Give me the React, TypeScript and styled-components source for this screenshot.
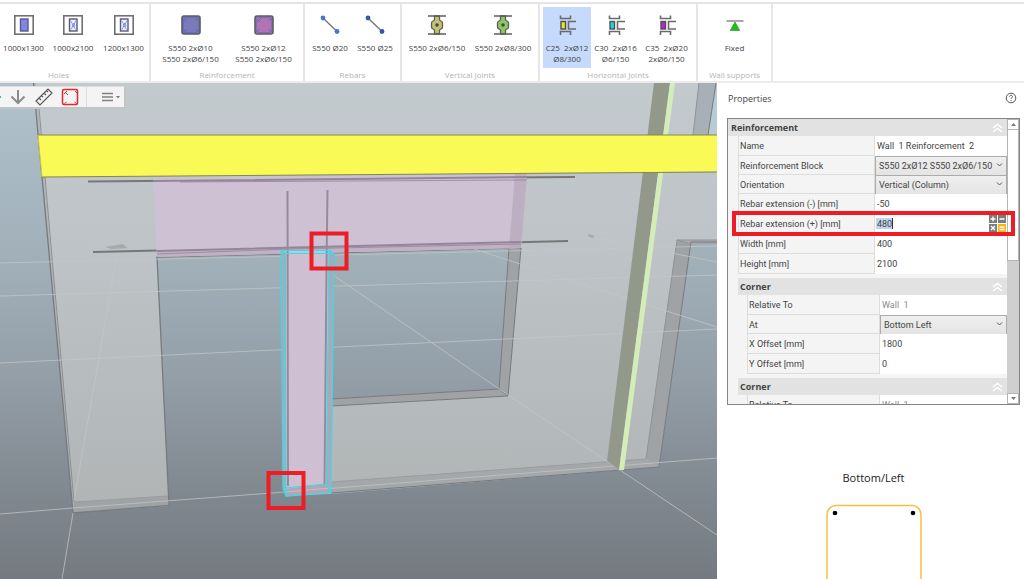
import React, { useId } from "react";
import styled, { createGlobalStyle } from "styled-components";

const GlobalStyle = createGlobalStyle`
  *, *::before, *::after { box-sizing: border-box; }
  html, body, #root { height: 100%; }
  body {
    margin: 0;
    background: #fff;
    color: #444;
    font-family: "Open Sans", "Noto Sans", sans-serif;
    font-size: 9px;
  }
  button, input, select { font: inherit; color: inherit; }
`;

const Page = styled.div`
  display: flex;
  flex-direction: column;
  height: 100%;
  overflow: hidden;
`;

/* ---------- ribbon ---------- */

const Ribbon = styled.header`
  display: flex;
  flex: none;
  height: 83px;
  padding-top: 2px;
  overflow: hidden;
  border-bottom: 2px solid #ececec;
`;

const RibbonBody = styled.div`
  display: flex;
  flex: 1;
  min-width: 0;
  border-top: 2px solid #e4e4e4;
`;

const Group = styled.section<{ $width: number; $scrolled?: boolean }>`
  display: flex;
  flex-direction: column;
  flex: none;
  align-items: ${(p) => (p.$scrolled ? "flex-end" : "center")};
  width: ${(p) => p.$width}px;
  margin-left: ${(p) => (p.$scrolled ? "-32px" : "0")};
  padding-top: 3px;
  border-right: 2px solid #e6e6e6;
`;

const Tools = styled.div`
  display: flex;
  flex: 1;
`;

const GroupName = styled.h2`
  align-self: stretch;
  margin: 0;
  color: #b4b4b4;
  font-size: 8px;
  font-weight: 400;
  line-height: 14px;
  text-align: center;
`;

const Tool = styled.button<{ $width: number; $active?: boolean }>`
  display: flex;
  flex-direction: column;
  align-items: center;
  gap: 6px;
  width: ${(p) => p.$width}px;
  height: 61px;
  padding: 7px 0 0;
  border: 0;
  background: ${(p) => (p.$active ? "#c5dafc" : "transparent")};
  font-size: 8px;
  line-height: 11px;
  text-align: center;
  white-space: pre;

  svg { flex: none; }
`;

const HoleIcon = ({ fill }: { fill: string }) => (
  <svg width="22" height="22" viewBox="0 0 22 22" fill="none">
    <rect x="1.8" y="1.8" width="18.4" height="18.4" stroke="#707070" strokeWidth="1.6" />
    <rect x="7.5" y="5" width="7.5" height="12" fill={fill} stroke="#555b80" strokeWidth="1.4" />
    <path d="M8.5 6.5l5 9M14 6.5l-5 9M10 11l2-2 1 3-2 1z" stroke="#7a86d8" strokeWidth="0.8" />
  </svg>
);

const BlockIcon = ({ fill }: { fill: string }) => (
  <svg width="22" height="22" viewBox="0 0 22 22" fill="none">
    <rect x="2" y="2" width="18" height="18" rx="2" fill={fill} stroke="#5b5b62" strokeWidth="1.6" />
    <rect x="3.500" y="3.500" width="15" height="15" rx="1.500" stroke="#6068b4" strokeWidth="0.6" />
    <path d="M4 8l4-4M4 5l3 3" stroke="#5968c8" strokeWidth="0.8" />
    <path d="M4 17.500l2-2M18 17.500l-2-2M18 4.500l-2 2" stroke="#4c5cc4" strokeWidth="1" />
  </svg>
);

const BarIcon = ({ fill }: { fill: string }) => (
  <svg width="22" height="22" viewBox="0 0 22 22">
    <path d="M4 4L18 17.500" stroke="#777" strokeWidth="1.4" />
    <circle cx="4" cy="4" r="2.400" fill={fill} />
    <circle cx="18" cy="17.500" r="2.400" fill={fill} />
  </svg>
);

const VerticalJointIcon = ({ fill }: { fill: string }) => (
  <svg width="22" height="22" viewBox="0 0 22 22">
    <path
      d="M8.500 2v3.500q0 1-1.500 1.500t-1.500 2v4q0 1.500 1.500 2t1.500 1.500V20h5v-3.500q0-1 1.500-1.500t1.500-2V9q0-1.500-1.500-2t-1.500-1.500V2z"
      fill={fill}
      stroke="#5c5f58"
      strokeWidth="1.300"
    />
    <path d="M2 2h18M2 20h18" stroke="#5e5e5e" strokeWidth="1.500" />
    <circle cx="11" cy="11" r="1.800" fill="#45484f" />
  </svg>
);

const HorizontalJointIcon = ({ fill }: { fill: string }) => (
  <svg width="22" height="22" viewBox="0 0 22 22" fill="none" stroke="#6a6a6a" strokeWidth="1.600">
    <path d="M4.500 1.500v3h10v-3M4.500 21v-3.500h10V21" />
    <path d="M20 7.500h-7.500v7.500H20" />
    <rect x="5" y="7.500" width="4.500" height="7.500" fill={fill} stroke="#505050" strokeWidth="1.400" />
  </svg>
);

const SupportIcon = () => (
  <svg width="22" height="22" viewBox="0 0 22 22">
    <path d="M2.500 7h17" stroke="#777" strokeWidth="1.300" />
    <path d="M11 8l4.800 8.500H6.200z" fill="#12c412" stroke="#3e8c3e" strokeWidth="0.700" />
  </svg>
);

interface ToolInfo {
  label: string;
  icon: React.ReactNode;
  width: number;
  active?: boolean;
}

const groups: { name: string; width: number; scrolled?: boolean; tools: ToolInfo[] }[] = [
  {
    name: "Holes",
    width: 183,
    scrolled: true,
    tools: [
      { label: "1000x1300", width: 49, icon: <HoleIcon fill="#8583f4" /> },
      { label: "1000x2100", width: 50, icon: <HoleIcon fill="#eef0fc" /> },
      { label: "1200x1300", width: 51, icon: <HoleIcon fill="#eef0fc" /> },
    ],
  },
  {
    name: "Reinforcement",
    width: 154,
    tools: [
      { label: "S550 2xØ10\nS550 2xØ6/150", width: 73, icon: <BlockIcon fill="#7b7abb" /> },
      { label: "S550 2xØ12\nS550 2xØ6/150", width: 73, icon: <BlockIcon fill="#b074b4" /> },
    ],
  },
  {
    name: "Rebars",
    width: 97,
    tools: [
      { label: "S550 Ø20", width: 45, icon: <BarIcon fill="#4478cc" /> },
      { label: "S550 Ø25", width: 45, icon: <BarIcon fill="#3757a4" /> },
    ],
  },
  {
    name: "Vertical Joints",
    width: 138,
    tools: [
      { label: "S550 2xØ6/150", width: 66, icon: <VerticalJointIcon fill="#c4c26c" /> },
      { label: "S550 2xØ8/300", width: 66, icon: <VerticalJointIcon fill="#8dc764" /> },
    ],
  },
  {
    name: "Horizontal Joints",
    width: 158,
    tools: [
      { label: "C25  2xØ12\nØ8/300", width: 48, active: true, icon: <HorizontalJointIcon fill="#e8e81c" /> },
      { label: "C30  2xØ16\nØ6/150", width: 49, icon: <HorizontalJointIcon fill="#22d4e4" /> },
      { label: "C35  2xØ20\n2xØ6/150", width: 53, icon: <HorizontalJointIcon fill="#cc18dc" /> },
    ],
  },
  {
    name: "Wall supports",
    width: 75,
    tools: [{ label: "Fixed", width: 48, icon: <SupportIcon /> }],
  },
];

/* ---------- 3D view ---------- */

const Workspace = styled.main`
  display: flex;
  flex: 1;
  min-height: 0;
`;

const View = styled.section`
  position: relative;
  flex: 1;
  min-width: 0;
  overflow: hidden;
  background: #939ea7;
`;

const Scene = styled.svg`
  display: block;
  width: 100%;
  height: 100%;
`;

const ViewTools = styled.div`
  position: absolute;
  top: 3px;
  left: 0;
  display: flex;
  align-items: center;
  height: 23px;
  padding: 0 4px 0 8px;
  border: 1px solid #dcdcdc;
  border-left: 0;
  border-right: 2px solid #c4c4c4;
  border-bottom: 2px solid #c4c4c4;
  background: #f4f4f4;

  &::before {
    position: absolute;
    left: 0;
    width: 1px;
    height: 2px;
    background: #41b8a0;
    content: "";
  }
`;

const ViewButton = styled.button`
  display: grid;
  place-items: center;
  width: 26px;
  height: 20px;
  padding: 0 6px 0 0;
  border: 0;
  background: none;
`;

const MenuButton = styled(ViewButton)`
  width: 34px;
  padding: 0 0 0 15px;
  border-left: 1px solid #dedede;
`;

const Model = () => (
  <Scene viewBox="0 83 717 496" preserveAspectRatio="xMinYMin slice" fill="none" aria-label="Wall model">
    <defs>
      <linearGradient id="sky" gradientUnits="userSpaceOnUse" x1="0" y1="83" x2="0" y2="579">
        <stop offset="0" stopColor="#b0c2cd" />
        <stop offset="0.4" stopColor="#9fadb6" />
        <stop offset="0.6" stopColor="#939ea7" />
        <stop offset="0.78" stopColor="#848c94" />
        <stop offset="1" stopColor="#747a80" />
      </linearGradient>
      <linearGradient id="wall" gradientUnits="userSpaceOnUse" x1="0" y1="83" x2="0" y2="510">
        <stop offset="0" stopColor="#c3cace" />
        <stop offset="0.4" stopColor="#bdc3c6" />
        <stop offset="1" stopColor="#b0b4b5" />
      </linearGradient>
    </defs>
    <rect y="83" width="717" height="496" fill="url(#sky)" />

    <path
      fill="url(#wall)"
      fillRule="evenodd"
      d="M33 83H717V241L691 244L659 467L331 494L286 495L283 254L157 257L169 506L73 513ZM332 253L509 248L499 389L331 399Z"
    />
    <path fill="#c3c5d0" opacity="0.5" d="M38 125H717V135H38Z" />
    <path fill="#b9cbd6" d="M716 83H717V135H708Z" />

    <g fill="#9fa3a5">
      <path d="M33 83L73 513V501L36 83Z" opacity="0.5" />
      <path d="M74 502L168 496L169 506L73 513Z" />
      <path d="M509 248L521 248L508 396L331 406V399L499 389Z" />
      <path d="M331 482L646 459L659 467L331 494Z" opacity="0.75" />
      <path d="M677 240L691 244L659 467L646 459Z" />
      <path d="M677 240H717V244H691Z" opacity="0.7" />
      <path d="M699 83H716L708 135H693Z" fill="#a8b0b7" />
    </g>

    <g stroke="#777b7d" strokeWidth="1">
      <path d="M33.500 83L38 134L42 177L73 513L169 505.500L157 257L283 254" strokeWidth="1.300" />
      <path d="M39 108L54 280L74 502" stroke="#8d9193" />
      <path d="M74 502L168 496M331 482L646 459" stroke="#9a9d9f" />
      <path d="M332 253L521 248L508 396L331 406M509 248L499 389L331 399M499 389L508 396" />
      <path d="M717 242H691L659 467L331 493" />
      <path d="M717 240H677L646 459M677 240L691 244M699 83L693 135" stroke="#8f9395" />
      <path d="M716 83L708 135" />
    </g>

    <g stroke="#c6c8c8" strokeWidth="1" opacity="0.72">
      <path d="M0 263L717 246M0 296L717 275M0 363L717 329M0 514L73 508L285 492L717 458" />
      <path d="M333 275L508 395L717 535M465 246L600 290L717 327M600 239L717 262" />
      <path d="M117 255L74 500M73 513L62 579" />
      <ellipse cx="117" cy="247" rx="28" ry="4" />
      <ellipse cx="590" cy="236" rx="26" ry="3" />
    </g>
    <path d="M105 247l18-3 4 4-15 1zM571 235h10M588 234l5 1 1 3-5-1z" fill="#9b9f9f" opacity="0.7" />

    <path fill="#93998a" d="M654 83H670L619 470L607 461Z" />
    <path fill="#d2edb7" d="M670 83H675L624 470H619Z" />
    <path stroke="#aaaeaa" opacity="0.7" d="M607 461L619 470" />

    <g stroke="#777" strokeWidth="2">
      <path d="M88 181.500L575 177" />
      <path d="M93 252L568 241" />
    </g>
    <path fill="#cfc1d4" d="M153 178L527 174L521 248L157 257Z" />
    <path fill="#bcafc2" d="M515 174H527L521 248L509 249Z" />
    <path fill="#b8a9bc" opacity="0.65" d="M157 252L521 243V248L157 257Z" />
    <g stroke="#94859a" strokeWidth="1.500">
      <path d="M153 181L527 177M157 251L521 242" strokeWidth="2" />
      <path d="M157 254L290 249L521 244M180 182L527 180" strokeWidth="1" opacity="0.8" />
    </g>

    <path fill="#cfbfd3" d="M282 251H332L330 493L286 495Z" />
    <path fill="#b3a5b6" d="M282 251L286 252V495L283 489ZM329 250L334 253L331 493L326 484ZM283 489L326 484L331 493L286 496Z" />
    <path stroke="#c7bcc9" d="M285 492L331 488" />
    <path stroke="#968b9a" strokeWidth="2" d="M287.500 191L288 486M327.500 190L326.500 270L324.500 484" />
    <g stroke="#2de2ec" strokeWidth="1.200">
      <path d="M281 250.500H329L334 253.500L331 493L286 496L283 488L281 250.500" />
      <path d="M281 250.500L285 253.500H334M285 253.500L286 496M329 250.500L326.500 484L331 493M283 488L326.500 484" />
    </g>

    <path fill="#fafa57" d="M38 135H717V171.500L42 177Z" />
    <path stroke="#85864d" d="M38 135H717M42 177L717 172" />
    <path stroke="#c8c848" d="M38 135L42 177" />

    <g stroke="#ee1c24" strokeWidth="4">
      <rect x="311.500" y="233.500" width="35" height="35" />
      <rect x="268.500" y="473" width="35" height="35" />
    </g>
  </Scene>
);

/* ---------- properties ---------- */

const Sidebar = styled.aside`
  display: flex;
  flex: none;
  flex-direction: column;
  width: 307px;
  padding: 7px 4px 0 10px;
  overflow: hidden;
  background: #fff;
`;

const Heading = styled.div`
  display: flex;
  flex: none;
  align-items: center;
  justify-content: space-between;
  height: 16px;
  margin-bottom: 12px;
  padding: 0 3px 0 1px;

  h1 {
    margin: 0;
    font-size: 9px;
    font-weight: 400;
  }

  button {
    display: flex;
    padding: 0;
    border: 0;
    background: none;
  }
`;

const PropertyBox = styled.div`
  display: flex;
  flex: none;
  height: 287px;
  overflow: hidden;
  border: 1px solid #858585;
  background: #f4f4f4;
  font-family: Roboto, "Open Sans", sans-serif;
`;

const PropertyList = styled.div`
  flex: 1;
  min-width: 0;
`;

const Section = styled.section<{ $nested?: boolean }>`
  margin-top: ${(p) => (p.$nested ? "4px" : "0")};
  margin-left: ${(p) => (p.$nested ? "10px" : "0")};
`;

const SectionTitle = styled.button<{ $nested?: boolean }>`
  display: flex;
  align-items: center;
  justify-content: space-between;
  width: 100%;
  height: 17px;
  padding: 0 4px 0 ${(p) => (p.$nested ? "2px" : "3px")};
  border: 0;
  background: #e2e2e2;
  font-family: "Open Sans", sans-serif;
  font-weight: 700;
`;

const Rows = styled.div<{ $nested?: boolean }>`
  margin-left: ${(p) => (p.$nested ? "9px" : "10px")};
  border-left: 1px solid #ddd;
`;

const Row = styled.div<{ $nested?: boolean; $select?: boolean }>`
  position: relative;
  display: grid;
  grid-template-columns: minmax(0, 1fr) ${(p) => (p.$nested ? "127px" : "132px")};
  align-items: stretch;
  height: ${(p) => (p.$select ? "19px" : "20px")};
  border-bottom: 1px solid #dcdcdc;
`;

const RowLabel = styled.label`
  padding-left: 1px;
  border-right: 1px solid #dcdcdc;
  line-height: 20px;
  white-space: nowrap;
`;

const TextInput = styled.input<{ $selected?: boolean }>`
  min-width: 0;
  width: 100%;
  padding: 0 2px;
  border: 0;
  border-radius: 0;
  outline: 0;
  background: ${(p) =>
    p.$selected
      ? "linear-gradient(90deg, #fff 1px, #bfd4ee 1px 17px, #333 17px 18px, #fff 18px) 0 4px / 100% 11px no-repeat #fff"
      : "#fff"};

  &:disabled { color: #8a8a8a; }
`;

const SelectBox = styled.div`
  position: relative;
  display: flex;

  select {
    width: 100%;
    padding: 0 12px 0 3px;
    border: 1px solid #ababab;
    border-radius: 0;
    outline: 0;
    appearance: none;
    background: linear-gradient(#efefef, #e4e4e4);
  }

  svg {
    position: absolute;
    top: 6px;
    right: 4px;
    pointer-events: none;
  }
`;

const Calculator = styled.button`
  position: absolute;
  top: 1px;
  right: 1px;
  display: flex;
  padding: 0;
  border: 0;
  background: none;
`;

const Highlight = styled.span`
  position: absolute;
  inset: -3px -8px -3px -7px;
  z-index: 1;
  border: 4px solid #ee1c24;
  pointer-events: none;
`;

const ScrollBar = styled.div`
  display: flex;
  flex: none;
  flex-direction: column;
  width: 12px;
  background: #cfcfcf;

  button {
    display: grid;
    flex: none;
    place-items: center;
    height: 11px;
    padding: 0;
    border: 1px solid #b4b4b4;
    background: #fff;
  }
`;

const Thumb = styled.div`
  height: 131px;
  margin-bottom: auto;
  border: 1px solid #b4b4b4;
  border-top: 0;
  background: #fff;
`;

const Preview = styled.figure`
  display: flex;
  flex: none;
  flex-direction: column;
  align-items: center;
  margin: 65px 0 0;

  figcaption {
    margin-bottom: 18px;
    color: #222;
    font-size: 11px;
    line-height: 16px;
  }
`;

interface PropertyProps {
  label: string;
  value: string;
  select?: boolean;
  nested?: boolean;
  disabled?: boolean;
  editing?: boolean;
}

const Property = ({ label, value, select, nested, disabled, editing }: PropertyProps) => {
  const id = useId();
  return (
    <Row $nested={nested} $select={select}>
      <RowLabel htmlFor={id}>{label}</RowLabel>
      {select ? (
        <SelectBox>
          <select id={id} defaultValue={value}>
            <option>{value}</option>
          </select>
          <svg width="7" height="6" viewBox="0 0 7 6" fill="none" stroke="#555">
            <path d="M1 1.500l2.500 2.500L6 1.500" />
          </svg>
        </SelectBox>
      ) : (
        <TextInput id={id} defaultValue={value} disabled={disabled} $selected={editing} />
      )}
      {editing && (
        <>
          <Calculator aria-label="Calculator">
            <svg width="17" height="17" viewBox="0 0 17 17" fill="none" stroke="#fff" strokeWidth="1.300">
              <path d="M0 0h8v8H0zM9 0h8v8H9zM0 9h8v8H0z" fill="#7c7c7c" stroke="none" />
              <path d="M9 9h8v8H9z" fill="#f5b50f" stroke="none" />
              <path d="M4 1.500v5M1.500 4h5M10.500 4h5M2 11l4 4M6 11l-4 4M10.500 12h5M10.500 14.500h5" />
            </svg>
          </Calculator>
          <Highlight />
        </>
      )}
    </Row>
  );
};

const PropertySection = ({
  title,
  nested,
  items,
}: {
  title: string;
  nested?: boolean;
  items: PropertyProps[];
}) => (
  <Section $nested={nested}>
    <SectionTitle $nested={nested}>
      {title}
      <svg width="11" height="10" viewBox="0 0 11 10" fill="none" stroke="#fff" strokeWidth="1.400">
        <path d="M1 5l4.500-3.500L10 5M1 9l4.500-3.500L10 9" />
      </svg>
    </SectionTitle>
    <Rows $nested={nested}>
      {items.map((item) => (
        <Property key={item.label} nested={nested} {...item} />
      ))}
    </Rows>
  </Section>
);

const reinforcement: PropertyProps[] = [
  { label: "Name", value: "Wall  1 Reinforcement  2" },
  { label: "Reinforcement Block", value: "S550 2xØ12 S550 2xØ6/150", select: true },
  { label: "Orientation", value: "Vertical (Column)", select: true },
  { label: "Rebar extension (-) [mm]", value: "-50" },
  { label: "Rebar extension (+) [mm]", value: "480", editing: true },
  { label: "Width [mm]", value: "400" },
  { label: "Height [mm]", value: "2100" },
];

const relativeTo: PropertyProps = { label: "Relative To", value: "Wall  1", disabled: true };

const startCorner: PropertyProps[] = [
  relativeTo,
  { label: "At", value: "Bottom Left", select: true },
  { label: "X Offset [mm]", value: "1800" },
  { label: "Y Offset [mm]", value: "0" },
];

const endCorner: PropertyProps[] = [relativeTo];

export default function App() {
  return (
    <Page>
      <GlobalStyle />
      <Ribbon>
        <RibbonBody>
          {groups.map((group) => (
            <Group key={group.name} $width={group.width} $scrolled={group.scrolled}>
              <Tools>
                {group.tools.map((tool) => (
                  <Tool key={tool.label} $width={tool.width} $active={tool.active}>
                    {tool.icon}
                    <span>{tool.label}</span>
                  </Tool>
                ))}
              </Tools>
              <GroupName>{group.name}</GroupName>
            </Group>
          ))}
        </RibbonBody>
      </Ribbon>
      <Workspace>
        <View>
          <Model />
          <ViewTools>
            <ViewButton aria-label="Look down">
              <svg width="16" height="16" viewBox="0 0 16 16" fill="none" stroke="#8b8b8b" strokeWidth="2">
                <path d="M8 1v13M1.500 7.500L8 14l6.500-6.500" />
              </svg>
            </ViewButton>
            <ViewButton aria-label="Measure">
              <svg width="18" height="18" viewBox="0 0 18 18" fill="none" stroke="#555" strokeWidth="1.200">
                <path d="M1 13L13 1l4 4L5 17zM4 10l2 2M6.500 7.500l1.500 1.500M9 5l2 2M11.500 2.500L13 4" />
              </svg>
            </ViewButton>
            <ViewButton aria-label="Reinforcement">
              <svg width="18" height="18" viewBox="0 0 18 18" fill="none" stroke="#e3262c" strokeWidth="1.500">
                <rect x="1.500" y="1.500" width="15" height="15" rx="1.500" />
                <path d="M3 6l3-3M4 4l3 3M14 3l2 2M3.500 15.500l2-1.500M15.500 15.500l-2-1.500" strokeWidth="1" />
              </svg>
            </ViewButton>
            <MenuButton aria-label="Menu">
              <svg width="18" height="10" viewBox="0 0 18 10" fill="none" stroke="#808080" strokeWidth="1.300">
                <path d="M0 1.500h11M0 5h11M0 8.500h11" />
                <path d="M14 4h4l-2 2.500z" fill="#777" stroke="none" />
              </svg>
            </MenuButton>
          </ViewTools>
        </View>
        <Sidebar>
          <Heading>
            <h1>Properties</h1>
            <button aria-label="Help">
              <svg width="12" height="12" viewBox="0 0 12 12" fill="none" stroke="#555">
                <circle cx="6" cy="6" r="4.800" />
                <path d="M4.500 4.800c0-2 3-2 3 0 0 1-1.500 1-1.500 2.200M6 8v1" />
              </svg>
            </button>
          </Heading>
          <PropertyBox>
            <PropertyList>
              <PropertySection title="Reinforcement" items={reinforcement} />
              <PropertySection title="Corner" nested items={startCorner} />
              <PropertySection title="Corner" nested items={endCorner} />
            </PropertyList>
            <ScrollBar>
              <button aria-label="Scroll up">
                <svg width="5" height="3" viewBox="0 0 5 3"><path d="M0 3L2.500 0 5 3z" fill="#777" /></svg>
              </button>
              <Thumb />
              <button aria-label="Scroll down">
                <svg width="5" height="3" viewBox="0 0 5 3"><path d="M0 0L2.500 3 5 0z" fill="#777" /></svg>
              </button>
            </ScrollBar>
          </PropertyBox>
          <Preview>
            <figcaption>Bottom/Left</figcaption>
            <svg width="96" height="160" viewBox="0 0 96 160" fill="none">
              <rect x="1" y="1.500" width="94" height="157" rx="9" stroke="#f7bf3b" strokeWidth="1.500" />
              <circle cx="9" cy="9" r="2.300" fill="#000" />
              <circle cx="87" cy="9" r="2.300" fill="#000" />
            </svg>
          </Preview>
        </Sidebar>
      </Workspace>
    </Page>
  );
}
